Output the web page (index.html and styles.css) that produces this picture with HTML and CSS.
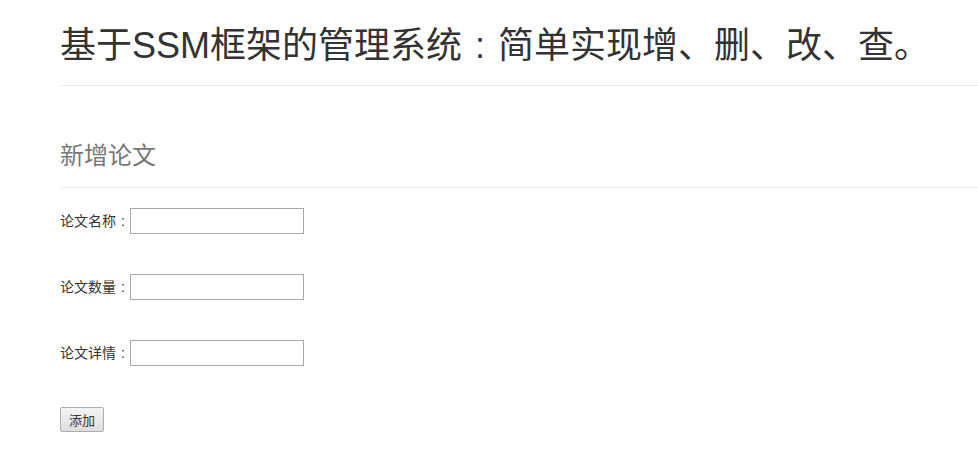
FILE: index.html
```html
<!DOCTYPE html>
<html lang="zh-CN">
<head>
<meta charset="utf-8">
<title>基于SSM框架的管理系统</title>
<link rel="stylesheet" href="styles.css">
</head>
<body>
<div class="page">
  <div class="page-header">
    <h1 class="title">基于SSM框架的管理系统<span class="colon">:</span>简单实现增、删、改、查。</h1>
  </div>
  <div class="page-header sub">
    <h3 class="subtitle">新增论文</h3>
  </div>
  <form class="paper-form">
    <div class="row"><label class="label">论文名称<span class="colon">:</span></label><input class="field" type="text"></div>
    <div class="row"><label class="label">论文数量<span class="colon">:</span></label><input class="field" type="text"></div>
    <div class="row"><label class="label">论文详情<span class="colon">:</span></label><input class="field" type="text"></div>
    <div class="row"><button class="btn" type="button">添加</button></div>
  </form>
</div>
</body>
</html>
```
FILE: styles.css
```css
html, body {
  margin: 0;
  padding: 0;
  background: #fff;
}
body {
  font-family: "Liberation Sans", "Noto Sans CJK SC", sans-serif;
  color: #333;
  font-size: 14px;
}
.page {
  padding-left: 60px;
}
.colon {
  display: inline-block;
  width: 1em;
  text-align: center;
}
.page-header {
  padding-top: 26px;
  padding-bottom: 19px;
  border-bottom: 1px solid #eee;
}
.title {
  margin: 0;
  font-size: 36px;
  font-weight: 400;
  line-height: 40px;
  color: #333;
  white-space: nowrap;
}
.page-header.sub {
  margin-top: 57px;
  padding-top: 0;
  padding-bottom: 18px;
}
.subtitle {
  margin: 0;
  font-size: 24px;
  font-weight: 400;
  line-height: 26px;
  color: #777;
}
.paper-form {
  display: flex;
  flex-direction: column;
  gap: 40px;
  padding-top: 20px;
}
.row {
  display: flex;
  align-items: center;
  height: 26px;
}
.label {
  font-size: 14px;
  line-height: 20px;
  color: #333;
  width: 70px;
  white-space: nowrap;
}
.field {
  box-sizing: border-box;
  width: 174px;
  height: 26px;
  margin: 0;
  padding: 1px 3px;
  border: 1px solid #a9a9a9;
  border-radius: 0;
  background: #fff;
  font-size: 13px;
}
.btn {
  box-sizing: border-box;
  width: 44px;
  height: 25px;
  margin: 0;
  padding: 0;
  border: 1px solid #acacac;
  border-radius: 2px;
  background: linear-gradient(#f4f4f4, #dedede);
  font-family: "Liberation Sans", "Noto Sans CJK SC", sans-serif;
  font-size: 13px;
  color: #333;
}
```
